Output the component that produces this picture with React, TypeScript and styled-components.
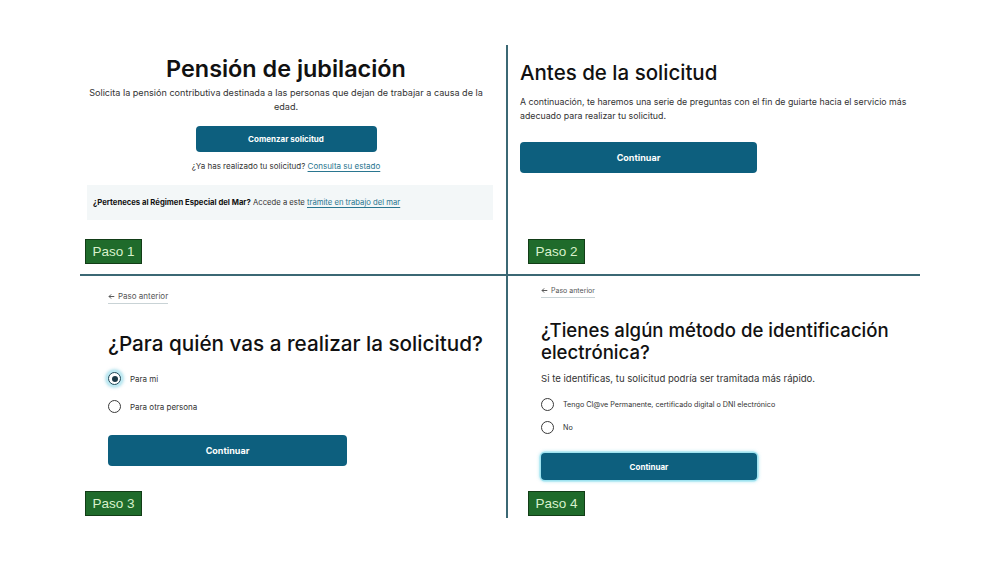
import * as React from 'react';
import styled, { createGlobalStyle, css } from 'styled-components';

const GlobalStyle = createGlobalStyle`
  html, body {
    margin: 0;
    padding: 0;
    background: #ffffff;
  }
  body {
    font-family: Inter, "Noto Sans", "Liberation Sans", sans-serif;
    color: #1a1a1a;
  }
  * { box-sizing: border-box; }
`;

const lineColor = '#3b6874';
const brandBlue = '#0d5f7e';
const linkColor = '#2a7690';

const Board = styled.main`
  width: 840px;
  margin: 45px 0 0 80px;
  display: grid;
  grid-template-columns: 428px 412px;
  grid-template-rows: 231px 242px;
`;

interface CellProps {
  $left?: boolean;
  $top?: boolean;
  $pad: string;
}

const Cell = styled.section<CellProps>`
  display: flex;
  flex-direction: column;
  align-items: flex-start;
  padding: ${p => p.$pad};
  ${p => p.$left && css`border-right: 2px solid ${lineColor};`}
  ${p => p.$top && css`border-bottom: 2px solid ${lineColor};`}
`;

const Hero = styled.div`
  align-self: stretch;
  margin-right: 8px;
  display: flex;
  flex-direction: column;
  align-items: center;
  text-align: center;
`;

const HeroTitle = styled.h1`
  margin: 0;
  font-size: 23.4px;
  line-height: 30px;
  font-weight: 600;
  color: #111;
`;

const HeroText = styled.p`
  margin: 2px 0 0;
  font-size: 9.1px;
  line-height: 14px;
  color: #333;
  max-width: 404px;
`;

interface ButtonProps {
  $w: number;
  $h: number;
  $focus?: boolean;
  $size?: number;
}

const PrimaryButton = styled.button<ButtonProps>`
  width: ${p => p.$w}px;
  height: ${p => p.$h}px;
  border: none;
  border-radius: 4px;
  background: ${brandBlue};
  color: #ffffff;
  font-family: Inter, "Liberation Sans", sans-serif;
  font-weight: 700;
  font-size: ${p => p.$size ?? 9}px;
  cursor: pointer;
  ${p => p.$focus && css`
    box-shadow: 0 0 0 1.5px #9fe3f0, 0 0 3px 2px rgba(120, 215, 235, 0.5);
  `}
`;

const SmallNote = styled.p`
  margin: 8px 0 0;
  font-size: 8px;
  line-height: 12px;
  color: #333;
`;

const Link = styled.a`
  color: ${linkColor};
  text-decoration: underline;
  text-underline-offset: 1.5px;
`;

const InfoBox = styled.div`
  align-self: stretch;
  margin-top: 13px;
  height: 35px;
  padding: 0 6px;
  display: flex;
  align-items: center;
  background: #f3f7f8;
  font-size: 7.7px;
  color: #333;
  strong {
    color: #111;
    font-weight: 700;
  }
`;

const StepBadge = styled.div<{ $ml: number }>`
  margin-top: auto;
  margin-left: ${p => p.$ml}px;
  width: 57px;
  height: 25px;
  display: flex;
  align-items: center;
  justify-content: center;
  background: #1f6b2b;
  border: 1.5px solid #123d17;
  color: #d8f1cc;
  font-family: "Liberation Sans", Arial, sans-serif;
  font-size: 13.5px;
`;

const SectionTitle = styled.h2<{ $size: number; $lh: number }>`
  margin: 0;
  font-size: ${p => p.$size}px;
  line-height: ${p => p.$lh}px;
  font-weight: 500;
  color: #111;
`;

const Lead = styled.p<{ $size: number; $lh: number; $mt: number }>`
  margin: ${p => p.$mt}px 0 0;
  font-size: ${p => p.$size}px;
  line-height: ${p => p.$lh}px;
  color: #333;
`;

const BackLink = styled.a<{ $size: number }>`
  display: inline-flex;
  align-items: center;
  gap: 3px;
  font-size: ${p => p.$size}px;
  line-height: 11px;
  color: #555;
  padding-bottom: 1px;
  border-bottom: 1px solid #c9d3d6;
  text-decoration: none;
`;

const RadioList = styled.div<{ $gap: number; $mt: number }>`
  display: flex;
  flex-direction: column;
  gap: ${p => p.$gap}px;
  margin-top: ${p => p.$mt}px;
`;

const RadioRow = styled.label<{ $size: number }>`
  display: flex;
  align-items: center;
  gap: 9px;
  font-size: ${p => p.$size}px;
  color: #333;
`;

const RadioDot = styled.span<{ $checked?: boolean }>`
  width: 13px;
  height: 13px;
  border-radius: 50%;
  border: 1.5px solid #3a3a3a;
  background: #fff;
  flex-shrink: 0;
  display: flex;
  align-items: center;
  justify-content: center;
  ${p => p.$checked && css`
    border-color: #1f4756;
    box-shadow: 0 0 0 2px #bfeaf3, 0 0 3px 3px rgba(110, 200, 220, 0.5);
    &::after {
      content: '';
      width: 6px;
      height: 6px;
      border-radius: 50%;
      background: #1c3a47;
    }
  `}
`;

const Arrow = () => (
  <svg width="7" height="7" viewBox="0 0 10 10" fill="none" stroke="#555" strokeWidth="1.4">
    <path d="M9 5H1.5M4.5 2L1.5 5l3 3" />
  </svg>
);

export default function App() {
  return (
    <>
      <GlobalStyle />
      <Board>
        <Cell $left $top $pad="9px 13px 10px 7px">
          <Hero>
            <HeroTitle>Pensión de jubilación</HeroTitle>
            <HeroText>
              Solicita la pensión contributiva destinada a las personas que dejan de trabajar a causa de la edad.
            </HeroText>
            <PrimaryButton $w={181} $h={26} $size={8} style={{ marginTop: 12 }}>
              Comenzar solicitud
            </PrimaryButton>
            <SmallNote>
              ¿Ya has realizado tu solicitud? <Link>Consulta su estado</Link>
            </SmallNote>
          </Hero>
          <InfoBox>
            <span>
              <strong>¿Perteneces al Régimen Especial del Mar?</strong> Accede a este{' '}
              <Link>trámite en trabajo del mar</Link>
            </span>
          </InfoBox>
          <StepBadge $ml={-2}>Paso 1</StepBadge>
        </Cell>

        <Cell $top $pad="14px 0 10px 12px">
          <SectionTitle $size={20.5} $lh={28}>Antes de la solicitud</SectionTitle>
          <Lead $size={8.8} $lh={14} $mt={8}>
            A continuación, te haremos una serie de preguntas con el fin de guiarte hacia el servicio más adecuado
            para realizar tu solicitud.
          </Lead>
          <PrimaryButton $w={237} $h={31} style={{ marginTop: 19 }}>
            Continuar
          </PrimaryButton>
          <StepBadge $ml={8}>Paso 2</StepBadge>
        </Cell>

        <Cell $left $pad="15px 8px 2px 28px">
          <BackLink $size={8}>
            <Arrow />
            Paso anterior
          </BackLink>
          <SectionTitle $size={20.7} $lh={30} style={{ marginTop: 25, whiteSpace: 'nowrap' }}>
            ¿Para quién vas a realizar la solicitud?
          </SectionTitle>
          <RadioList $gap={15} $mt={13}>
            <RadioRow $size={8}>
              <RadioDot $checked />
              Para mi
            </RadioRow>
            <RadioRow $size={8}>
              <RadioDot />
              Para otra persona
            </RadioRow>
          </RadioList>
          <PrimaryButton $w={239} $h={31} style={{ marginTop: 22 }}>
            Continuar
          </PrimaryButton>
          <StepBadge $ml={-23}>Paso 3</StepBadge>
        </Cell>

        <Cell $pad="9px 8px 2px 33px">
          <BackLink $size={7}>
            <Arrow />
            Paso anterior
          </BackLink>
          <SectionTitle $size={18.6} $lh={22} style={{ marginTop: 21 }}>
            ¿Tienes algún método de identificación electrónica?
          </SectionTitle>
          <Lead $size={9.6} $lh={14} $mt={9}>
            Si te identificas, tu solicitud podría ser tramitada más rápido.
          </Lead>
          <RadioList $gap={10} $mt={12}>
            <RadioRow $size={7.2}>
              <RadioDot />
              Tengo Cl@ve Permanente, certificado digital o DNI electrónico
            </RadioRow>
            <RadioRow $size={7.2}>
              <RadioDot />
              No
            </RadioRow>
          </RadioList>
          <PrimaryButton $w={216} $h={27} $size={8} $focus style={{ marginTop: 19 }}>
            Continuar
          </PrimaryButton>
          <StepBadge $ml={-13}>Paso 4</StepBadge>
        </Cell>
      </Board>
    </>
  );
}
